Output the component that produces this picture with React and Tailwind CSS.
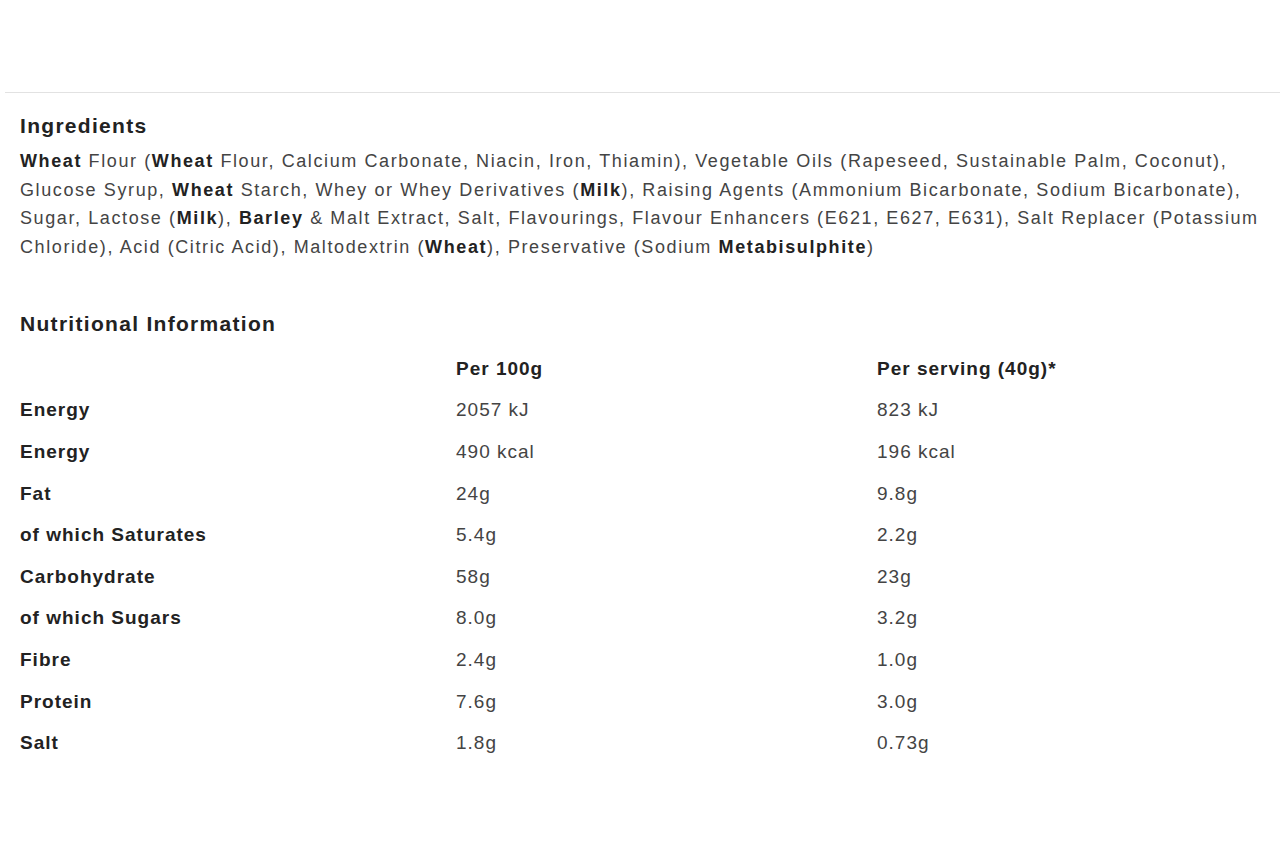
export default function App() {
  const rows = [
    ['Energy', '2057 kJ', '823 kJ'],
    ['Energy', '490 kcal', '196 kcal'],
    ['Fat', '24g', '9.8g'],
    ['of which Saturates', '5.4g', '2.2g'],
    ['Carbohydrate', '58g', '23g'],
    ['of which Sugars', '8.0g', '3.2g'],
    ['Fibre', '2.4g', '1.0g'],
    ['Protein', '7.6g', '3.0g'],
    ['Salt', '1.8g', '0.73g'],
  ];
  const b = 'font-bold text-[#222]';

  return (
    <div className="min-h-[853px] bg-white text-[#444]" style={{ fontFamily: '"Liberation Sans", Arial, sans-serif' }}>
      <div className="h-[92px]" />
      <div className="ml-[5px] border-t border-[#e2e2e2]" />

      {/* Ingredients */}
      <section className="px-5 pt-[19px]">
        <h3 className="text-[21px] font-bold tracking-[1.3px] text-[#222] leading-[28px]">Ingredients</h3>
        <p className="mt-[7px] whitespace-nowrap text-[18px] tracking-[1.6px] leading-[28.7px]">
          <span className={b}>Wheat</span> Flour (<span className={b}>Wheat</span> Flour, Calcium Carbonate, Niacin, Iron, Thiamin), Vegetable Oils (Rapeseed, Sustainable Palm, Coconut),<br />
          Glucose Syrup, <span className={b}>Wheat</span> Starch, Whey or Whey Derivatives (<span className={b}>Milk</span>), Raising Agents (Ammonium Bicarbonate, Sodium Bicarbonate),<br />
          Sugar, Lactose (<span className={b}>Milk</span>), <span className={b}>Barley</span> &amp; Malt Extract, Salt, Flavourings, Flavour Enhancers (E621, E627, E631), Salt Replacer (Potassium<br />
          Chloride), Acid (Citric Acid), Maltodextrin (<span className={b}>Wheat</span>), Preservative (Sodium <span className={b}>Metabisulphite</span>)
        </p>
      </section>

      {/* Nutritional Information */}
      <section className="px-5 pt-[48px]">
        <h3 className="text-[21px] font-bold tracking-[1.3px] text-[#222] leading-[28px]">Nutritional Information</h3>
        <div className="mt-[10px] text-[19px] tracking-[1px] leading-[41.6px]">
          <div className="grid grid-cols-[436px_421px_1fr]">
            <div />
            <div className={b}>Per 100g</div>
            <div className={b}>Per serving (40g)*</div>
          </div>
          {rows.map(([label, a, c], i) => (
            <div key={i} className="grid grid-cols-[436px_421px_1fr]">
              <div className={b}>{label}</div>
              <div>{a}</div>
              <div>{c}</div>
            </div>
          ))}
        </div>
      </section>
    </div>
  );
}
